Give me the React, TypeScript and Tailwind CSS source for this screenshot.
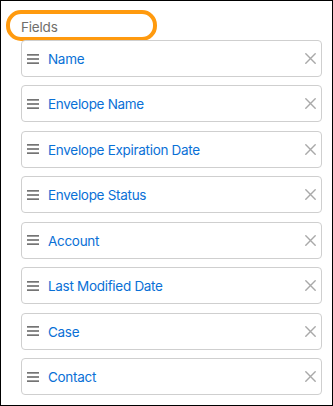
import React from 'react';

const fields = [
  'Name',
  'Envelope Name',
  'Envelope Expiration Date',
  'Envelope Status',
  'Account',
  'Last Modified Date',
  'Case',
  'Contact',
];

const Handle = () => (
  <svg width="12" height="10" viewBox="0 0 12 10" className="shrink-0">
    <rect x="0" y="0" width="12" height="1.7" fill="#747474" />
    <rect x="0" y="4.15" width="12" height="1.7" fill="#747474" />
    <rect x="0" y="8.3" width="12" height="1.7" fill="#747474" />
  </svg>
);

const Close = () => (
  <svg width="11" height="11" viewBox="0 0 11 11" className="shrink-0">
    <path d="M0.8 0.8L10.2 10.2M10.2 0.8L0.8 10.2" stroke="#a9a9a9" strokeWidth="1.4" strokeLinecap="round" />
  </svg>
);

const App: React.FC = () => {
  return (
    <div className="w-[333px] h-[406px] bg-white border border-black overflow-hidden font-['Inter',sans-serif]">
      {/* Header */}
      <div className="h-[39px] pl-[5px] pt-[9px]">
        <div className="w-[151px] h-[31px] rounded-[15px] border-4 border-[#ff9a0e] flex items-center pl-[11px] pt-[3px] text-[13.5px] tracking-[-0.2px] text-[#706e6b]">
          Fields
        </div>
      </div>

      {/* List */}
      <div className="flex flex-col gap-[8.45px] pl-[20px] pr-[10px]">
        {fields.map((f) => (
          <div
            key={f}
            className="h-[37px] border border-[#cfcfcf] rounded-[4px] flex items-center pl-[5px] pr-[5px]"
          >
            <Handle />
            <span className="ml-[9px] pt-[1px] text-[13.5px] tracking-[-0.3px] text-[#0a70d6] flex-1">{f}</span>
            <Close />
          </div>
        ))}
      </div>
    </div>
  );
};

export default App;
